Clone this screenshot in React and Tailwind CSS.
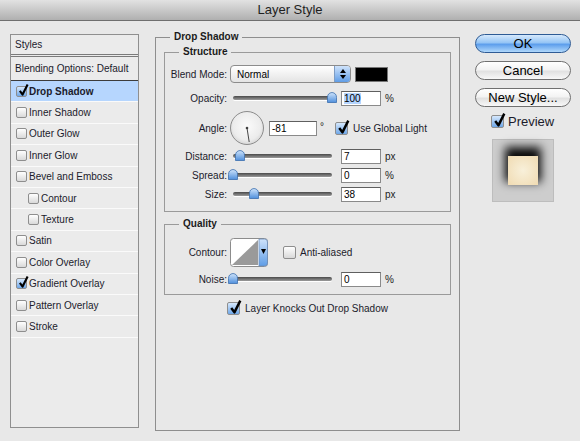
import React from 'react';

const STYLES = [
  { label: 'Drop Shadow', checked: true, selected: true },
  { label: 'Inner Shadow' },
  { label: 'Outer Glow' },
  { label: 'Inner Glow' },
  { label: 'Bevel and Emboss' },
  { label: 'Contour', indent: true },
  { label: 'Texture', indent: true },
  { label: 'Satin' },
  { label: 'Color Overlay' },
  { label: 'Gradient Overlay', checked: true },
  { label: 'Pattern Overlay' },
  { label: 'Stroke' },
];

function Check({ checked, big }) {
  const size = big ? 'w-[13px] h-[13px]' : 'w-[11px] h-[11px]';
  return (
    <span
      className={`relative inline-block shrink-0 rounded-[2px] border border-[#8e8e8e] ${size} ${
        checked ? 'bg-linear-to-b from-[#d6e8fc] to-[#6ea7e8]' : 'bg-linear-to-b from-white to-[#d9d9d9]'
      }`}
    >
      {checked && (
        <svg className="absolute left-[1px] top-[-4px]" width={big ? 13 : 11} height={big ? 16 : 14} viewBox="0 0 12 15">
          <path d="M2 8.5 L5 12.5 L10.5 1.5" stroke="#000" strokeWidth="2.3" fill="none" strokeLinejoin="round" />
        </svg>
      )}
    </span>
  );
}

function Knob({ className }) {
  return (
    <svg className={`absolute top-[1px] ${className}`} width="10" height="11" viewBox="0 0 10 11">
      <defs>
        <linearGradient id="kg" x1="0" y1="0" x2="0" y2="1">
          <stop offset="0" stopColor="#cfe4fb" />
          <stop offset="1" stopColor="#4f8fdc" />
        </linearGradient>
      </defs>
      <path d="M0.5 10.5 V5.5 Q0.5 1 5 0.5 Q9.5 1 9.5 5.5 V10.5 Z" fill="url(#kg)" stroke="#3b6fae" strokeWidth="0.8" />
    </svg>
  );
}

function Slider({ knob }) {
  return (
    <div className="relative w-[99px] h-[14px] flex items-center">
      <div className="w-full h-[4px] rounded-full bg-linear-to-b from-[#4a4a4a] to-[#9c9c9c] shadow-[0_1px_0_#fff]" />
      <Knob className={knob} />
    </div>
  );
}

function Field({ value, w = 'w-[40px]', selected }) {
  return (
    <div className={`${w} h-[15px] bg-white border border-[#8a8a8a] border-t-[#5f5f5f] px-[2px] text-[10px] leading-[13px] text-black`}>
      {selected ? <span className="bg-[#b5d5ff]">{value}</span> : value}
    </div>
  );
}

function Label({ children }) {
  return <div className="w-[62px] text-right text-[10px] text-[#1b1b2b] shrink-0">{children}</div>;
}

function Button({ children, primary }) {
  return (
    <div
      className={`h-[19px] w-[96px] rounded-full border flex items-center justify-center text-[13px] text-black ${
        primary
          ? 'border-[#2e5b95] bg-[linear-gradient(#d6e9fc,#95c5f5_45%,#5d9eec_55%,#b0d8fb)]'
          : 'border-[#707070] bg-[linear-gradient(#ffffff,#f3f3f3_45%,#e1e1e1_55%,#f8f8f8)]'
      }`}
    >
      {children}
    </div>
  );
}

function Dial() {
  return (
    <svg width="36" height="36" viewBox="0 0 36 36">
      <defs>
        <radialGradient id="dg" cx="0.5" cy="0.45" r="0.6">
          <stop offset="0" stopColor="#fbfbfb" />
          <stop offset="0.7" stopColor="#ececec" />
          <stop offset="1" stopColor="#cfcfcf" />
        </radialGradient>
      </defs>
      <circle cx="18" cy="18" r="16.5" fill="url(#dg)" stroke="#8c8c8c" strokeWidth="1" />
      <circle cx="18" cy="18" r="1.3" fill="#444" />
      <line x1="18" y1="18" x2="20.2" y2="32" stroke="#333" strokeWidth="0.9" />
    </svg>
  );
}

function ContourSwatch() {
  return (
    <svg width="38" height="29" viewBox="0 0 38 29">
      <defs>
        <linearGradient id="cb" x1="0" y1="0" x2="0" y2="1">
          <stop offset="0" stopColor="#cfe3fb" />
          <stop offset="1" stopColor="#5f9de6" />
        </linearGradient>
      </defs>
      <rect x="0.5" y="0.5" width="37" height="28" rx="3" fill="#fff" stroke="#8c8c8c" />
      <path d="M2 27 L28 2 L28 27 Z" fill="#9a9a9a" />
      <path d="M29 1 H34.5 Q37.5 1 37.5 4 V25 Q37.5 28 34.5 28 H29 Z" fill="url(#cb)" stroke="#6d8db8" strokeWidth="0.8" />
      <path d="M31 11 H36 L33.5 16 Z" fill="#000" />
    </svg>
  );
}

function Legend({ children, className }) {
  return (
    <legend className={`px-[4px] text-[10px] font-bold leading-[14px] text-[#1b1b1b] ${className}`}>{children}</legend>
  );
}

export default function App() {
  return (
    <div className="w-[580px] h-[441px] overflow-hidden bg-[#e8e8e8] font-['Liberation_Sans',Arial,sans-serif]">
      {/* title bar */}
      <div className="h-[21px] bg-linear-to-b from-[#e2e2e2] to-[#b0b0b0] border-b border-[#6f6f6f] flex items-center justify-center text-[13px] text-[#1e1e1e]">
        Layer Style
      </div>

      <div className="flex items-start pl-[10px]">
        {/* styles list */}
        <div className="mt-[13px] w-[129px] h-[394px] border border-[#8f8f8f] bg-[#ebebeb] text-[10px] text-[#1b1b2b]">
          <div className="h-[22px] flex items-center pl-[4px] border-b-[3px] border-double border-[#7a7a7a]">Styles</div>
          <div className="h-[24px] flex items-center pl-[4px] border-b border-[#3c3c3c]">Blending Options: Default</div>
          {STYLES.map((s) => (
            <div
              key={s.label}
              className={`h-[21.4px] flex items-center gap-[2px] border-b border-[#fafafa] ${s.indent ? 'pl-[17px]' : 'pl-[5px]'} ${
                s.selected ? 'bg-[#b6d6fe] font-bold' : ''
              }`}
            >
              <Check checked={s.checked} />
              <span>{s.label}</span>
            </div>
          ))}
        </div>

        {/* drop shadow group */}
        <fieldset className="ml-[16px] mt-[9px] w-[305px] h-[401px] border border-[#8e8e8e] px-[8px]">
          <Legend className="ml-[6px]">Drop Shadow</Legend>

          <fieldset className="mt-[1px] border border-[#9a9a9a] pb-[10px]">
            <Legend className="ml-[14px]">Structure</Legend>

            <div className="mt-[6px] flex items-center h-[18px]">
              <Label>Blend Mode:</Label>
              <div className="ml-[3px] w-[121px] h-[18px] rounded-[4px] border border-[#8c8c8c] bg-linear-to-b from-white to-[#e4e4e4] flex items-center overflow-hidden">
                <span className="flex-1 pl-[6px] text-[10px] text-black">Normal</span>
                <div className="w-[16px] h-full bg-linear-to-b from-[#cfe3fb] to-[#5f9de6] border-l border-[#7d9cc4] flex flex-col items-center justify-center gap-[2px]">
                  <svg width="6" height="4" viewBox="0 0 6 4"><path d="M0 4 L3 0 L6 4 Z" fill="#000" /></svg>
                  <svg width="6" height="4" viewBox="0 0 6 4"><path d="M0 0 L3 4 L6 0 Z" fill="#000" /></svg>
                </div>
              </div>
              <div className="ml-[4px] w-[33px] h-[15px] bg-black border border-[#777]" />
            </div>

            <div className="mt-[8px] flex items-center h-[14px]">
              <Label>Opacity:</Label>
              <div className="ml-[6px]"><Slider knob="left-[94px]" /></div>
              <div className="ml-[9px]"><Field value="100" selected /></div>
              <span className="ml-[4px] text-[10px] text-[#222]">%</span>
            </div>

            <div className="mt-[5px] flex items-center h-[36px]">
              <Label>Angle:</Label>
              <div className="ml-[2px]"><Dial /></div>
              <div className="ml-[4px]"><Field value="-81" w="w-[48px]" /></div>
              <span className="ml-[3px] self-start mt-[9px] text-[10px] text-[#222]">°</span>
              <div className="ml-[11px] flex items-center gap-[5px]">
                <Check checked big />
                <span className="text-[10px] text-[#1b1b2b]">Use Global Light</span>
              </div>
            </div>

            <div className="mt-[3px] flex items-center h-[14px]">
              <Label>Distance:</Label>
              <div className="ml-[6px]"><Slider knob="left-[2px]" /></div>
              <div className="ml-[9px]"><Field value="7" /></div>
              <span className="ml-[4px] text-[10px] text-[#222]">px</span>
            </div>

            <div className="mt-[5px] flex items-center h-[14px]">
              <Label>Spread:</Label>
              <div className="ml-[6px]"><Slider knob="left-[-5px]" /></div>
              <div className="ml-[9px]"><Field value="0" /></div>
              <span className="ml-[4px] text-[10px] text-[#222]">%</span>
            </div>

            <div className="mt-[5px] flex items-center h-[14px]">
              <Label>Size:</Label>
              <div className="ml-[6px]"><Slider knob="left-[16px]" /></div>
              <div className="ml-[9px]"><Field value="38" /></div>
              <span className="ml-[4px] text-[10px] text-[#222]">px</span>
            </div>
          </fieldset>

          <fieldset className="mt-[5px] border border-[#9a9a9a] pb-[8px]">
            <Legend className="ml-[14px]">Quality</Legend>

            <div className="mt-[7px] flex items-center h-[29px]">
              <Label>Contour:</Label>
              <div className="ml-[3px] flex"><ContourSwatch /></div>
              <div className="ml-[15px] flex items-center gap-[4px]">
                <Check big />
                <span className="text-[10px] text-[#1b1b2b]">Anti-aliased</span>
              </div>
            </div>

            <div className="mt-[5px] flex items-center h-[14px]">
              <Label>Noise:</Label>
              <div className="ml-[6px]"><Slider knob="left-[-5px]" /></div>
              <div className="ml-[9px]"><Field value="0" /></div>
              <span className="ml-[4px] text-[10px] text-[#222]">%</span>
            </div>
          </fieldset>

          <div className="mt-[6px] flex items-center justify-center gap-[5px]">
            <Check checked big />
            <span className="text-[10px] text-[#1b1b2b]">Layer Knocks Out Drop Shadow</span>
          </div>
        </fieldset>

        {/* buttons */}
        <div className="ml-[15px] mt-[13px] w-[96px] flex flex-col">
          <Button primary>OK</Button>
          <div className="mt-[8px]"><Button>Cancel</Button></div>
          <div className="mt-[8px]"><Button>New Style...</Button></div>
          <div className="mt-[5px] pl-[16px] flex items-center gap-[4px]">
            <Check checked big />
            <span className="text-[13px] text-[#1b1b2b]">Preview</span>
          </div>
          <div className="mt-[7px] ml-[17px] w-[62px] h-[63px] bg-[#cdcdcd] border border-[#bdbdbd] flex items-center justify-center">
            <div className="w-[30px] h-[29px] bg-[radial-gradient(circle,#f8f0da,#f0dbb2)] shadow-[0_-6px_9px_3px_rgba(0,0,0,0.95)]" />
          </div>
        </div>
      </div>
    </div>
  );
}
